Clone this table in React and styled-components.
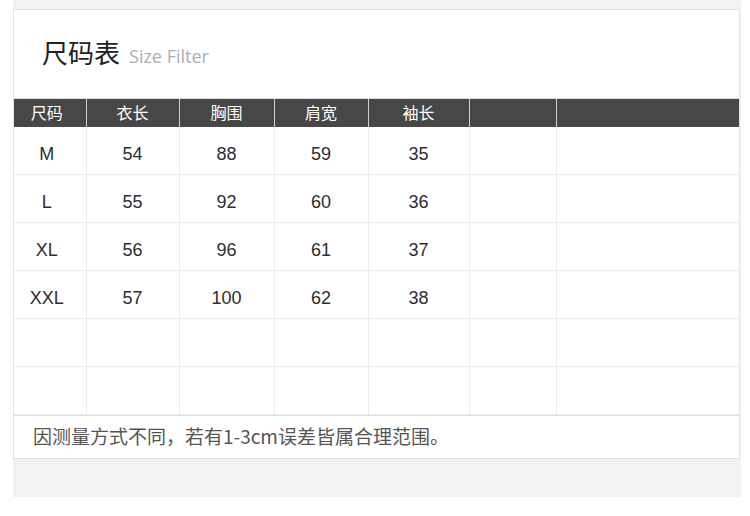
import styled, { createGlobalStyle } from "styled-components"

// Styles globaux de la page
const GlobalStyle = createGlobalStyle`
    body {
        margin: 0;
        background: #ffffff;
        font-family: "Noto Sans CJK SC", "Noto Sans", sans-serif;
    }
`

const Page = styled.div`
    margin-left: 13px;
    width: 728px;
    height: 497px;
    padding-top: 9px;
    box-sizing: border-box;
    background-color: #f2f2f2;
`
const Card = styled.div`
    width: 727px;
    box-sizing: border-box;
    background-color: #ffffff;
    border: 1px solid #e4e4e4;
`
const TitleBar = styled.div`
    height: 88px;
    box-sizing: border-box;
    display: flex;
    align-items: center;
    padding-left: 28px;
    padding-bottom: 6px;
`
const TitleLine = styled.div`
    display: flex;
    align-items: baseline;
    gap: 9px;
`
const TitleText = styled.h1`
    margin: 0;
    font-size: 26px;
    font-weight: 400;
    color: #222222;
    font-family: "Noto Sans CJK SC", sans-serif;
`
const SubTitle = styled.span`
    font-size: 18px;
    color: #a9afb7;
    font-family: "Open Sans", "Liberation Sans", sans-serif;
`
const Table = styled.table`
    width: 725px;
    border-collapse: collapse;
    table-layout: fixed;
`
const HeadCell = styled.th`
    height: 25px;
    padding: 0 0 3px 0;
    background-color: #474747;
    color: #ffffff;
    font-size: 16px;
    font-weight: 400;
    text-align: center;
    border-left: 1px solid #cfcfcf;
    border-top: 1px solid #dcdcdc;
    &:first-child {
        border-left: none;
        padding-right: 6px;
    }
`
const Cell = styled.td`
    height: 40px;
    padding: 7px 0 0 0;
    text-align: center;
    font-size: 18px;
    color: #2e2e2e;
    font-family: "Liberation Sans", Arial, sans-serif;
    border-left: 1px solid #ececec;
    border-bottom: 1px solid #ececec;
    &:first-child {
        border-left: none;
        padding-right: 6px;
    }
`
const Note = styled.div`
    height: 43px;
    display: flex;
    align-items: center;
    padding-left: 19px;
    padding-bottom: 3px;
    box-sizing: border-box;
    border-top: 1px solid #e0e0e0;
    font-size: 19px;
    color: #555555;
`

const columns = [72, 93, 95, 94, 101, 87, 183]
const headers = ["尺码", "衣长", "胸围", "肩宽", "袖长", "", ""]
const rows = [
    ["M", "54", "88", "59", "35", "", ""],
    ["L", "55", "92", "60", "36", "", ""],
    ["XL", "56", "96", "61", "37", "", ""],
    ["XXL", "57", "100", "62", "38", "", ""],
    ["", "", "", "", "", "", ""],
    ["", "", "", "", "", "", ""],
]

function App() {
    return (
        <>
            <GlobalStyle />
            <Page>
                <Card>
                    <TitleBar>
                        <TitleLine>
                            <TitleText>尺码表</TitleText>
                            <SubTitle>Size Filter</SubTitle>
                        </TitleLine>
                    </TitleBar>
                    <Table>
                        <colgroup>
                            {columns.map((w, i) => (
                                <col key={i} style={{ width: w }} />
                            ))}
                        </colgroup>
                        <thead>
                            <tr>
                                {headers.map((h, i) => (
                                    <HeadCell key={i}>{h}</HeadCell>
                                ))}
                            </tr>
                        </thead>
                        <tbody>
                            {rows.map((row, r) => (
                                <tr key={r}>
                                    {row.map((v, c) => (
                                        <Cell key={c}>{v}</Cell>
                                    ))}
                                </tr>
                            ))}
                        </tbody>
                    </Table>
                    <Note>因测量方式不同，若有1-3cm误差皆属合理范围。</Note>
                </Card>
            </Page>
        </>
    )
}

export default App
